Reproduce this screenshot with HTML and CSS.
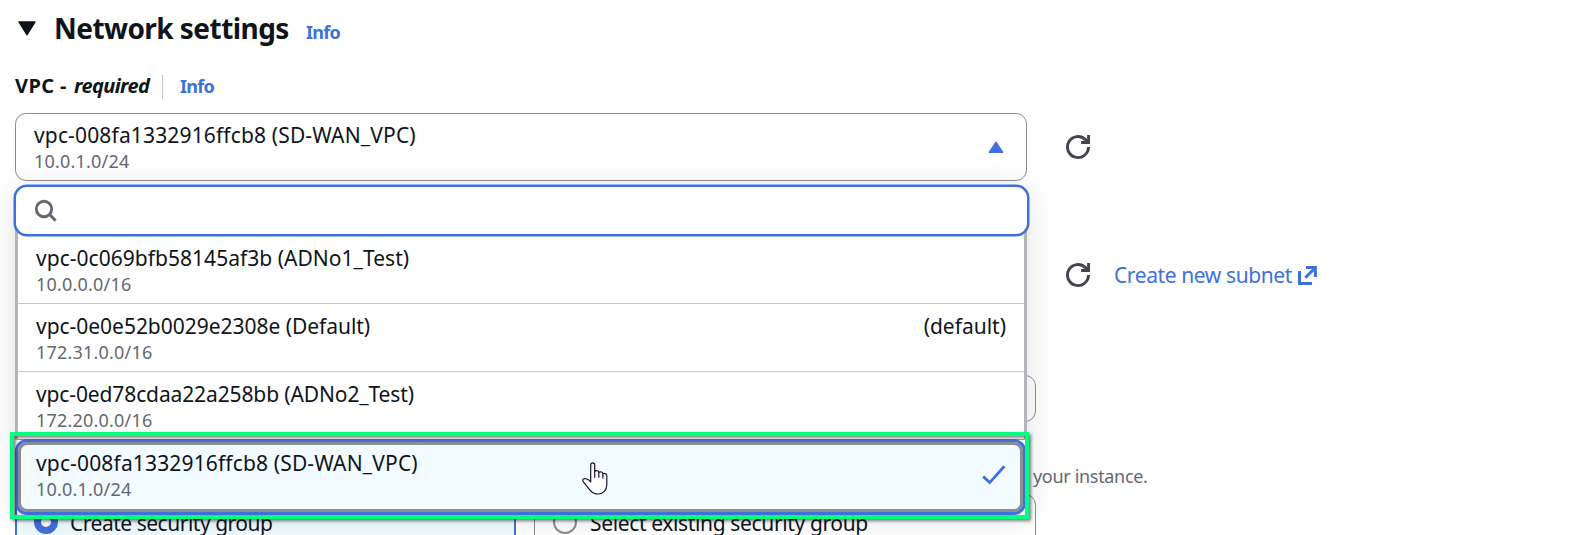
FILE: index.html
```html
<!DOCTYPE html>
<html lang="en">
<head>
<meta charset="utf-8">
<title>Network settings</title>
<link rel="stylesheet" href="styles.css">
</head>
<body>
<main class="panel">
  <header class="panel-header">
    <svg class="caret" width="18" height="15" viewBox="0 0 18 15"><path d="M1.2 1h15.6L9 13.6z" fill="#0f141a" stroke="#0f141a" stroke-width="1.6" stroke-linejoin="round"/></svg>
    <h2 class="title">Network settings</h2>
    <a class="info">Info</a>
  </header>

  <div class="label-row">
    <span class="label">VPC -</span><em class="label-required">required</em>
    <span class="divider"></span>
    <a class="info">Info</a>
  </div>

  <div class="field-row">
    <div class="select">
      <div class="trigger">
        <div>
          <div class="name name-d">vpc-008fa1332916ffcb8 (SD-WAN_VPC)</div>
          <div class="cidr">10.0.1.0/24</div>
        </div>
        <svg width="16" height="13" viewBox="0 0 16 13"><path d="M8 1.4 14.6 11.3H1.4z" fill="#4070d9" stroke="#4070d9" stroke-width="1.6" stroke-linejoin="round"/></svg>
      </div>
      <div class="dropdown">
        <div class="search">
          <svg width="24" height="24" viewBox="0 0 24 24" fill="none" stroke="#656871" stroke-width="2.9"><circle cx="10" cy="10" r="7.7"/><path d="M15.4 15.4 21.6 21.6"/></svg>
        </div>
        <ul class="options">
          <li class="option">
            <div><div class="name name-a">vpc-0c069bfb58145af3b (ADNo1_Test)</div><div class="cidr">10.0.0.0/16</div></div>
          </li>
          <li class="option">
            <div><div class="name name-b">vpc-0e0e52b0029e2308e (Default)</div><div class="cidr">172.31.0.0/16</div></div>
            <span class="tag">(default)</span>
          </li>
          <li class="option">
            <div><div class="name name-c">vpc-0ed78cdaa22a258bb (ADNo2_Test)</div><div class="cidr">172.20.0.0/16</div></div>
          </li>
        </ul>
        <div class="option selected">
          <div><div class="name name-d">vpc-008fa1332916ffcb8 (SD-WAN_VPC)</div><div class="cidr">10.0.1.0/24</div></div>
          <svg class="check" width="24" height="20" viewBox="0 0 24 20" fill="none" stroke="#4070d9" stroke-width="2.8"><path d="M1.2 11.4 7.7 17.6 22.3 1.2"/></svg>
        </div>
        <div class="highlight"></div>
        <svg class="pointer" width="26" height="33" viewBox="0 0 26 33" fill="#fff" stroke="#15152a" stroke-width="1.2" stroke-linejoin="round" stroke-linecap="round"><path d="M8.7 20V3.2C8.7.2 12.7.2 12.7 3.2V9.3C14.6 8.1 16.6 8.7 16.8 10.3 18.6 9.3 20.7 10 20.9 11.7 23.2 10.8 24.8 12 24.8 14V22.6C24.8 28.2 21.3 32 16 32 12.4 32 9.8 30.3 7.8 27.8L1.4 19.8C-.2 17.6 1.7 16 4.2 16.8 6 17.4 7.5 18.4 8.7 20Z"/><path d="M12.7 9.3v6M16.8 10.3v5M20.9 11.7v4.4"/></svg>
      </div>
    </div>
    <svg class="refresh" width="26" height="26" viewBox="0 0 26 26" fill="none" stroke="#424650" stroke-width="2.9"><path d="M23.5 13A10.5 10.5 0 1 1 20.4 5.6L23 8.2"/><path d="M23.6 1v7.5H16"/></svg>
  </div>

  <div class="subnet-row">
    <svg class="refresh" width="26" height="26" viewBox="0 0 26 26" fill="none" stroke="#424650" stroke-width="2.9"><path d="M23.5 13A10.5 10.5 0 1 1 20.4 5.6L23 8.2"/><path d="M23.6 1v7.5H16"/></svg>
    <a class="subnet-link">Create new subnet</a>
    <svg width="19" height="19" viewBox="0 0 19 19" fill="none" stroke="#4070d9" stroke-width="3"><path d="M1.5 5v12.4H14M8 1.6h9.4V11M17 2 7.3 11.7"/></svg>
  </div>

  <div class="input"></div>
  <p class="help">your instance.</p>

  <div class="tiles">
    <div class="tile active"><span class="radio on"></span><span class="tile-text create">Create security group</span></div>
    <div class="tile"><span class="radio"></span><span class="tile-text existing">Select existing security group</span></div>
  </div>
</main>
</body>
</html>
```
FILE: styles.css
```css
* { box-sizing: border-box; }
html, body { margin: 0; height: 535px; overflow: hidden; background: #fff; }
body { font-family: "Noto Sans", "Open Sans", sans-serif; color: #0f141a; }
.panel { width: 1578px; height: 535px; padding-left: 15px; overflow: hidden; }
.panel-header { display: flex; height: 58px; align-items: flex-start; }
.caret { margin: 21px 18px 0 3px; }
.title { margin: 8px 17px 0 0; font-size: 28px; line-height: 40px; letter-spacing: -0.55px; font-weight: 700; width: 235px; white-space: nowrap; }
.info { color: #4070d9; font-size: 18px; font-weight: 700; line-height: 26px; letter-spacing: -0.7px; }
.panel-header .info { margin-top: 19px; }
.label-row { display: flex; height: 55px; padding-top: 16px; align-items: flex-start; white-space: nowrap; }
.label { margin-top: -1px; font-size: 20px; line-height: 26px; font-weight: 700; width: 59px; letter-spacing: 0.4px; }
.label-required { margin-top: -1px; font-size: 20px; line-height: 26px; font-weight: 700; width: 88px; letter-spacing: -0.6px; }
.label-row .info { margin-top: -1px; }
.divider { width: 1px; height: 24px; margin: 1px 17px 0 0; background: #c6c6cd; }
.field-row { display: flex; height: 68px; align-items: center; }
.select { position: relative; width: 1012px; height: 68px; }
.trigger { display: flex; justify-content: space-between; align-items: center; height: 68px; padding: 0 22px 0 18px; border: 1px solid #8c8c94; border-radius: 11px; }
.name { font-size: 21px; line-height: 28px; height: 28px; white-space: nowrap; }
.name-a { letter-spacing: 0.03px; }
.name-b { letter-spacing: -0.03px; }
.name-c { letter-spacing: -0.12px; }
.name-d { letter-spacing: 0.15px; }
.cidr { font-size: 18px; line-height: 25px; height: 25px; letter-spacing: 0.2px; color: #656871; white-space: nowrap; }
.dropdown { position: absolute; z-index: 2; left: 0; top: 72px; width: 1012px; height: 329px; background: #fff; border-radius: 12px; box-shadow: 0 4px 30px rgba(0, 7, 22, .12); }
.search { position: relative; z-index: 1; height: 51px; width: 1015px; margin-left: -1px; padding: 12px 18px; border: 2px solid #4070d9; border-radius: 13px; background: #fff; box-shadow: 0 0 0 .5px #4070d9; }
.options { list-style: none; margin: -9px 0 0; padding: 9px 0 0; border: solid #b4b4bb; border-width: 0 3px; }
.option { display: flex; justify-content: space-between; height: 68px; padding: 8px 18px 0; border-bottom: 1px solid #c6c6cd; }
.option:last-child { border-bottom-color: #999; }
.tag { font-size: 21px; line-height: 28px; white-space: nowrap; }
.options + .selected { height: 76px; width: 1011px; margin-top: -1px; padding: 7px 15px 0 18px; border: 3px solid #4070d9; border-radius: 12px; background: #f2fbff; box-shadow: inset 0 0 0 3px #8c8c94; }
.check { margin: 16px 2px 0 0; }
.highlight { position: absolute; left: -5px; top: 247px; width: 1019px; height: 87px; border: 4px solid #00ff80; box-shadow: 2px 2px 3px rgba(0, 0, 0, .5), inset 2px 2px 3px rgba(0, 0, 0, .45); }
.pointer { position: absolute; left: 567px; top: 277px; }
.refresh { margin-left: 38px; flex: none; }
.subnet-row { display: flex; align-items: center; height: 46px; margin: 71px 0 0 1012px; }
.subnet-link { width: 184px; margin-left: 23px; color: #4070d9; font-size: 21px; line-height: 28px; letter-spacing: -0.4px; white-space: nowrap; }
.input { width: 1021px; height: 47px; margin-top: 77px; border: 1px solid #8c8c94; border-radius: 11px; }
.help { margin: 41px 0 0 1018px; font-size: 18px; line-height: 26px; letter-spacing: -0.32px; color: #656871; white-space: nowrap; }
.tiles { display: grid; grid-template-columns: 501px 502px; gap: 18px; margin-top: 5px; }
.tile { display: flex; height: 70px; padding: 15px 18px 0; gap: 13px; border: 1px solid #8c8c94; border-radius: 11px; }
.tile.active { border: 2px solid #4070d9; background: #f0fbff; padding: 14px 17px 0; gap: 12px; }
.radio { flex: none; width: 24px; height: 24px; border: 2px solid #8c8c94; border-radius: 50%; background: #fff; }
.radio.on { border: 7px solid #4070d9; }
.tile-text { margin-top: -1px; font-size: 21px; line-height: 28px; letter-spacing: -0.36px; white-space: nowrap; }
.create { letter-spacing: -0.48px; }
```
